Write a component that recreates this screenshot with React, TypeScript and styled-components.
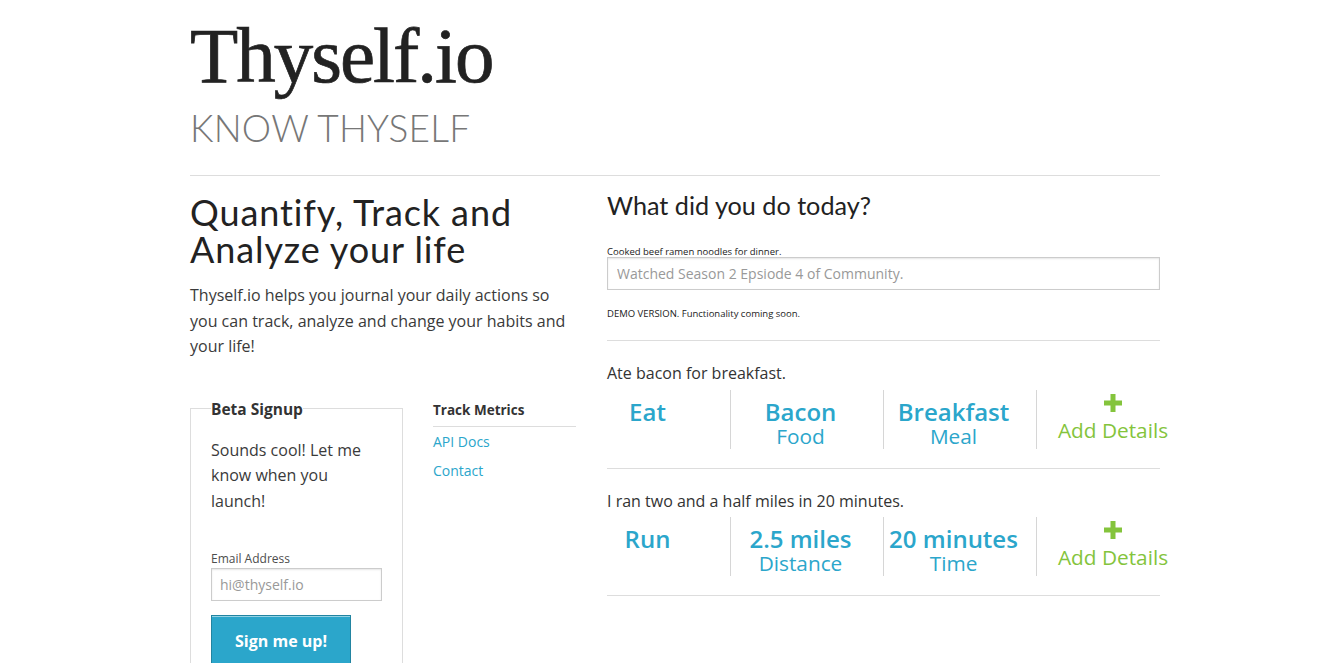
import React from "react";
import styled, { createGlobalStyle } from "styled-components";

const GlobalStyle = createGlobalStyle`
  html, body { margin: 0; padding: 0; background: #fff; }
  body {
    font-family: "Open Sans", "Noto Sans", Arial, sans-serif;
    color: #333;
    -webkit-font-smoothing: antialiased;
  }
  * { box-sizing: border-box; }
`;

const BLUE = "#2ba6cb";
const GREEN = "#84c43c";

const Page = styled.div`
  width: 970px;
  margin-left: 190px;
  padding-top: 16px;
`;

const Header = styled.header`
  padding-bottom: 25px;
  border-bottom: 1px solid #ddd;
`;

const Title = styled.h1`
  margin: 0;
  font-family: "Liberation Serif", "Times New Roman", serif;
  font-weight: 400;
  font-size: 79px;
  line-height: 79px;
  letter-spacing: -2px;
  color: #222;
  -webkit-text-stroke: 0.7px #222;
`;

const Tagline = styled.h2`
  margin: 11px 0 0;
  font-family: Lato, "Open Sans", sans-serif;
  font-weight: 300;
  font-size: 37px;
  line-height: 44px;
  color: #777;
  letter-spacing: 0.2px;
`;

const Columns = styled.div`
  display: grid;
  grid-template-columns: 387px 553px;
  column-gap: 30px;
  padding-top: 18px;
`;

const Column = styled.div`
  display: flex;
  flex-direction: column;
`;

const Heading = styled.h2`
  margin: 0;
  font-family: Lato, "Open Sans", sans-serif;
  font-weight: 400;
  font-size: 36px;
  line-height: 37px;
  letter-spacing: 0.9px;
  color: #222;
`;

const Lead = styled.p`
  margin: 15px 0 0;
  font-size: 16px;
  line-height: 25.6px;
  color: #3a3a3a;
`;

const SubGrid = styled.div`
  display: grid;
  grid-template-columns: 213px 143px;
  column-gap: 30px;
  margin-top: 38px;
  align-items: start;
`;

const Fieldset = styled.fieldset`
  margin: 0;
  padding: 18px 20px 30px;
  border: 1px solid #ddd;
  min-width: 0;
`;

const Legend = styled.legend`
  padding: 0;
  font-weight: 700;
  font-size: 15.5px;
  color: #333;
`;

const SignupText = styled.p`
  margin: 0;
  font-size: 16px;
  line-height: 25.5px;
  color: #3a3a3a;
`;

const FieldLabel = styled.label`
  display: block;
  margin-top: 36px;
  font-size: 12px;
  line-height: 18px;
  color: #4d4d4d;
`;

const EmailInput = styled.input`
  display: block;
  width: 100%;
  height: 33px;
  margin: 0;
  padding: 0 8px;
  border: 1px solid #ccc;
  box-shadow: inset 0 1px 2px rgba(0, 0, 0, 0.1);
  font-family: inherit;
  font-size: 14px;
  color: #333;
  outline: none;
  &::placeholder { color: #999; }
`;

const Button = styled.button`
  display: block;
  margin-top: 14px;
  width: 140px;
  height: 52px;
  padding: 0;
  background: ${BLUE};
  border: 1px solid #2284a1;
  box-shadow: inset 0 1px 0 rgba(255, 255, 255, 0.5);
  color: #fff;
  font-family: inherit;
  font-weight: 700;
  font-size: 16px;
  cursor: pointer;
`;

const Nav = styled.nav`
  display: flex;
  flex-direction: column;
  padding-top: 3px;
`;

const NavTitle = styled.h5`
  margin: 0;
  padding-bottom: 7px;
  border-bottom: 1px solid #ddd;
  font-weight: 700;
  font-size: 13.5px;
  line-height: 18px;
  color: #333;
`;

const NavList = styled.ul`
  list-style: none;
  margin: 5px 0 0;
  padding: 0;
  display: flex;
  flex-direction: column;
  gap: 10px;
`;

const NavLink = styled.a`
  display: block;
  font-size: 14px;
  line-height: 19px;
  color: ${BLUE};
  text-decoration: none;
`;

const Question = styled.h3`
  margin: 0;
  font-family: Lato, "Open Sans", sans-serif;
  font-weight: 400;
  font-size: 25.2px;
  line-height: 22px;
  color: #222;
`;

const TinyText = styled.div<{ $top: number }>`
  margin-top: ${(p) => p.$top}px;
  font-size: 9.5px;
  line-height: 10px;
  color: #222;
`;

const ActivityInput = styled.input`
  display: block;
  width: 100%;
  height: 33px;
  margin: 0;
  padding: 0 9px;
  border: 1px solid #ccc;
  box-shadow: inset 0 1px 2px rgba(0, 0, 0, 0.1);
  font-family: inherit;
  font-size: 14px;
  color: #333;
  outline: none;
  &::placeholder { color: #999; }
`;

const Entries = styled.div`
  margin-top: 21px;
  border-top: 1px solid #ddd;
`;

const Entry = styled.section`
  padding: 20px 0 19px;
  border-bottom: 1px solid #ddd;
`;

const EntryText = styled.p`
  margin: 0;
  font-size: 16px;
  line-height: 25.6px;
  color: #333;
`;

const Metrics = styled.div`
  display: flex;
  margin: 3px 0 0 -29px;
`;

const Metric = styled.div<{ $divider?: boolean }>`
  flex: 0 0 153px;
  height: 59px;
  padding: 9px 13px 0 0;
  display: flex;
  flex-direction: column;
  align-items: center;
  border-right: ${(p) => (p.$divider ? "1px solid #d6d6d6" : "none")};
  white-space: nowrap;
`;

const MetricValue = styled.div`
  font-weight: 600;
  font-size: 24px;
  line-height: 25px;
  color: ${BLUE};
`;

const MetricLabel = styled.div<{ $green?: boolean }>`
  font-size: 20.8px;
  line-height: 25px;
  color: ${(p) => (p.$green ? GREEN : BLUE)};
`;

const AddCell = styled(Metric)`
  padding: 4px 1px 0 0;
`;

const PlusIcon = styled.svg`
  display: block;
  width: 18px;
  height: 18px;
  margin-bottom: 6px;
`;

type MetricData = { value?: string; label?: string };

const Plus = () => (
  <PlusIcon viewBox="0 0 18 18">
    <rect x="6.5" y="0" width="5" height="18" fill={GREEN} />
    <rect x="0" y="6.5" width="18" height="5" fill={GREEN} />
  </PlusIcon>
);

const ActivityEntry = ({ text, metrics }: { text: string; metrics: MetricData[] }) => (
  <Entry>
    <EntryText>{text}</EntryText>
    <Metrics>
      {metrics.map((m, i) => (
        <Metric key={i} $divider>
          <MetricValue>{m.value}</MetricValue>
          {m.label && <MetricLabel>{m.label}</MetricLabel>}
        </Metric>
      ))}
      <AddCell>
        <Plus />
        <MetricLabel $green>Add Details</MetricLabel>
      </AddCell>
    </Metrics>
  </Entry>
);

export default function App() {
  return (
    <>
      <GlobalStyle />
      <Page>
        <Header>
          <Title>Thyself.io</Title>
          <Tagline>KNOW THYSELF</Tagline>
        </Header>
        <Columns>
          <Column>
            <Heading>
              Quantify, Track and
              <br />
              Analyze your life
            </Heading>
            <Lead>
              Thyself.io helps you journal your daily actions so you can track, analyze and change
              your habits and your life!
            </Lead>
            <SubGrid>
              <Fieldset>
                <Legend>Beta Signup</Legend>
                <SignupText>Sounds cool! Let me know when you launch!</SignupText>
                <FieldLabel>
                  Email Address
                  <EmailInput placeholder="hi@thyself.io" />
                </FieldLabel>
                <Button>Sign me up!</Button>
              </Fieldset>
              <Nav>
                <NavTitle>Track Metrics</NavTitle>
                <NavList>
                  <li>
                    <NavLink href="#">API Docs</NavLink>
                  </li>
                  <li>
                    <NavLink href="#">Contact</NavLink>
                  </li>
                </NavList>
              </Nav>
            </SubGrid>
          </Column>
          <Column>
            <Question>What did you do today?</Question>
            <TinyText $top={31}>Cooked beef ramen noodles for dinner.</TinyText>
            <ActivityInput placeholder="Watched Season 2 Epsiode 4 of Community." />
            <TinyText $top={19}>DEMO VERSION. Functionality coming soon.</TinyText>
            <Entries>
              <ActivityEntry
                text="Ate bacon for breakfast."
                metrics={[{ value: "Eat" }, { value: "Bacon", label: "Food" }, { value: "Breakfast", label: "Meal" }]}
              />
              <ActivityEntry
                text="I ran two and a half miles in 20 minutes."
                metrics={[
                  { value: "Run" },
                  { value: "2.5 miles", label: "Distance" },
                  { value: "20 minutes", label: "Time" },
                ]}
              />
            </Entries>
          </Column>
        </Columns>
      </Page>
    </>
  );
}
